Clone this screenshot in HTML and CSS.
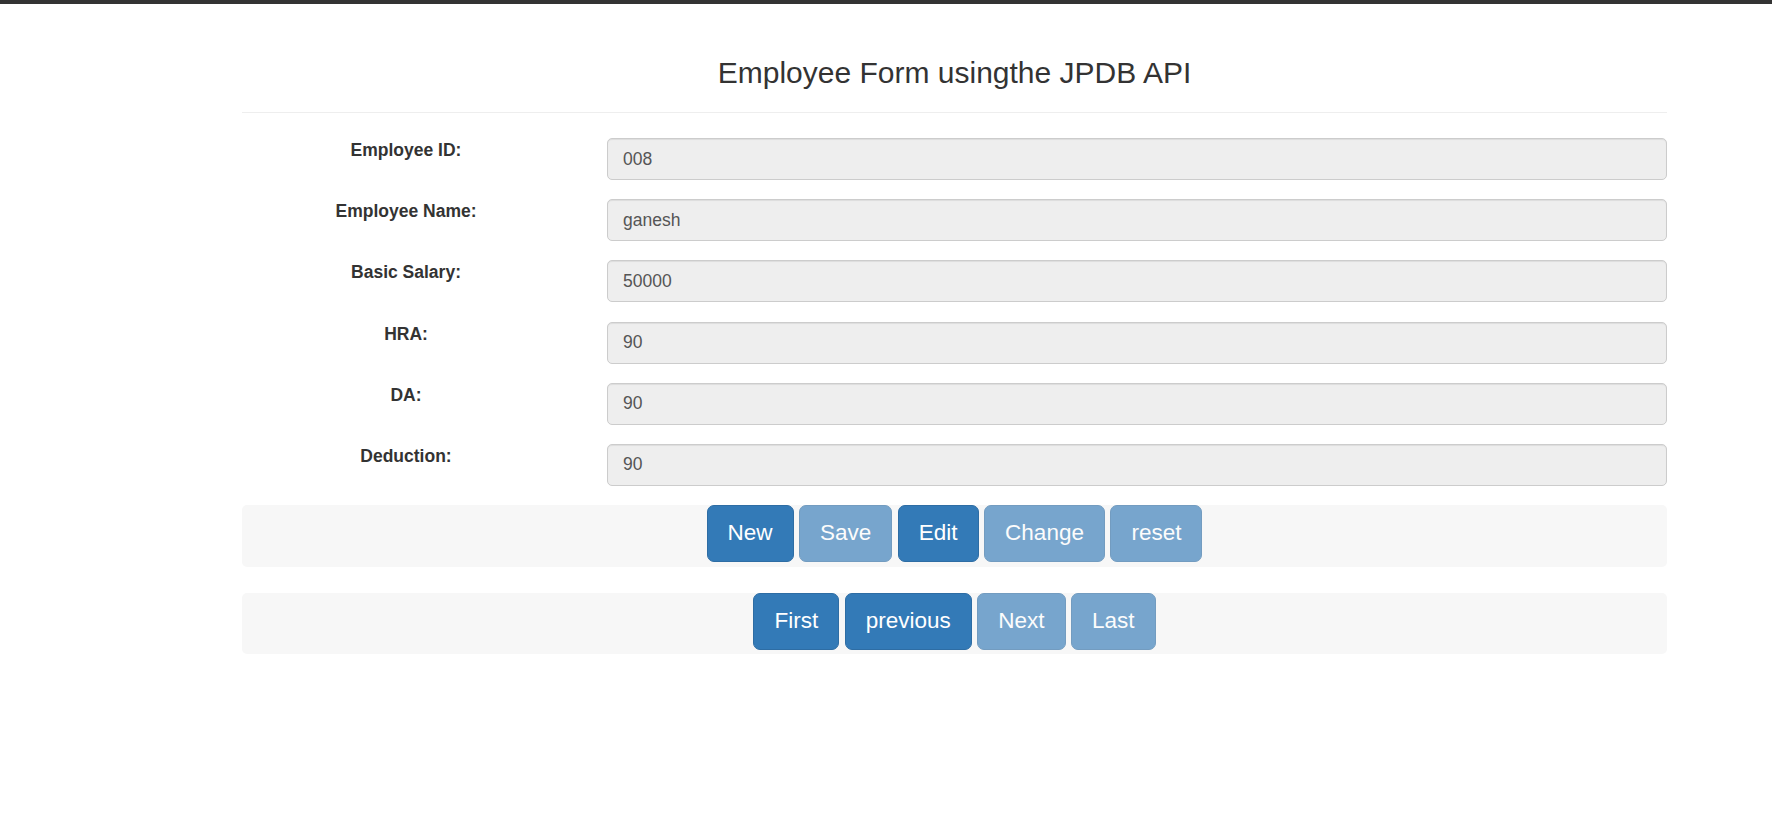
FILE: index.html
```html
<!DOCTYPE html>
<html lang="en">
<head>
<meta charset="utf-8">
<title>Employee Form</title>
<link rel="stylesheet" href="styles.css">
</head>
<body>
<div class="topbar"></div>
<div class="container">
  <header class="page-header">
    <h3 class="title">Employee Form usingthe JPDB API</h3>
  </header>
  <form class="form">
    <div class="row">
      <label class="label" for="empId">Employee ID:</label>
      <input class="input" id="empId" type="text" value="008" readonly>
    </div>
    <div class="row">
      <label class="label" for="empName">Employee Name:</label>
      <input class="input" id="empName" type="text" value="ganesh" readonly>
    </div>
    <div class="row">
      <label class="label" for="salary">Basic Salary:</label>
      <input class="input" id="salary" type="text" value="50000" readonly>
    </div>
    <div class="row">
      <label class="label" for="hra">HRA:</label>
      <input class="input" id="hra" type="text" value="90" readonly>
    </div>
    <div class="row">
      <label class="label" for="da">DA:</label>
      <input class="input" id="da" type="text" value="90" readonly>
    </div>
    <div class="row">
      <label class="label" for="deduction">Deduction:</label>
      <input class="input" id="deduction" type="text" value="90" readonly>
    </div>
  </form>
  <div class="btnbar">
    <button class="btn" type="button">New</button>
    <button class="btn btn-off" type="button">Save</button>
    <button class="btn" type="button">Edit</button>
    <button class="btn btn-off" type="button">Change</button>
    <button class="btn btn-off" type="button">reset</button>
  </div>
  <div class="btnbar btnbar-nav">
    <button class="btn" type="button">First</button>
    <button class="btn" type="button">previous</button>
    <button class="btn btn-off" type="button">Next</button>
    <button class="btn btn-off" type="button">Last</button>
  </div>
</div>
</body>
</html>
```
FILE: styles.css
```css
html, body {
  margin: 0;
  padding: 0;
  background: #fff;
}

body {
  font-family: "Liberation Sans", Arial, Helvetica, sans-serif;
  font-size: 17.5px;
  line-height: 25px;
  color: #333;
}

.topbar {
  height: 4px;
  background: #333;
}

.container {
  width: 1425px;
  margin-left: 242px;
}

.page-header {
  margin-top: 52px;
  padding-bottom: 23px;
  border-bottom: 1px solid #eee;
}

.title {
  margin: 0;
  font-size: 30px;
  line-height: 33px;
  font-weight: 400;
  text-align: center;
  color: #333;
}

.form {
  margin-top: 25px;
  display: flex;
  flex-direction: column;
  gap: 19.2px;
}

.row {
  display: grid;
  grid-template-columns: 328px 1fr;
  column-gap: 37px;
  align-items: start;
}

.label {
  font-weight: 700;
  text-align: center;
  color: #333;
  line-height: 25px;
}

.input {
  box-sizing: border-box;
  width: 100%;
  height: 42px;
  margin: 0;
  padding: 7.5px 15px;
  font-family: inherit;
  font-size: 17.5px;
  line-height: 25px;
  color: #555;
  background: #eee;
  border: 1px solid #ccc;
  border-radius: 5px;
  box-shadow: inset 0 1px 1px rgba(0, 0, 0, 0.075);
  outline: none;
}

.btnbar {
  margin-top: 19px;
  height: 62px;
  background: #f7f7f7;
  border-radius: 5px;
  display: flex;
  justify-content: center;
  align-items: flex-start;
  gap: 5.5px;
}

.btnbar-nav {
  margin-top: 26px;
  height: 61px;
}

.btn {
  box-sizing: border-box;
  height: 57px;
  margin: 0;
  padding: 12.5px 20px;
  font-family: inherit;
  font-size: 22.5px;
  line-height: 30px;
  color: #fff;
  background: #337ab7;
  border: 1px solid #2e6da4;
  border-radius: 7px;
  cursor: pointer;
}

.btn-off {
  opacity: 0.65;
  cursor: not-allowed;
}
```
